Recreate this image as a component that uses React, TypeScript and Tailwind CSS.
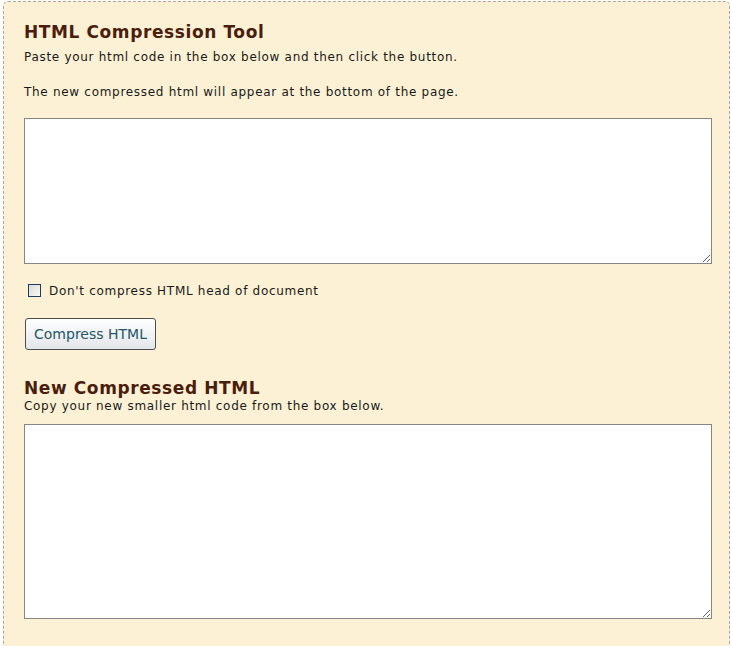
const verdana = "font-['Verdana','DejaVu_Sans',sans-serif]";

function Checkbox() {
  return (
    <span className="inline-block w-[13px] h-[13px] border border-[#1c3f5f] bg-gradient-to-br from-[#dcdcd6] to-[#f8f8f6] shrink-0" />
  );
}

export default function App() {
  return (
    <div className="w-[731px] h-[646px] overflow-hidden bg-white">
      <div
        className={`ml-[3px] mt-[1px] w-[727px] h-[700px] rounded-[5px] border border-dashed border-[#a9a9a0] bg-[#fcf1d4] pt-[20px] pl-[20px] pr-[16px] text-[#1a1a1a] ${verdana}`}
      >
        <h1 className="text-[17px] leading-[20px] tracking-[0.6px] font-bold text-[#4b1d0c]">
          HTML Compression Tool
        </h1>
        <p className="mt-[8px] text-[12px] leading-[15px] tracking-[0.7px]">
          Paste your html code in the box below and then click the button.
        </p>
        <p className="mt-[20px] text-[12px] leading-[15px] tracking-[0.7px]">
          The new compressed html will appear at the bottom of the page.
        </p>
        <textarea className="block mt-[18px] w-[688px] h-[146px] border border-[#858585] bg-white outline-none" />
        <label className="mt-[18px] ml-[4px] flex items-center gap-[8px] text-[12px] leading-[15px] tracking-[0.7px]">
          <Checkbox />
          <span className="mt-[2px]">Don't compress HTML head of document</span>
        </label>
        <button className="mt-[19px] ml-[1px] w-[131px] h-[32px] rounded-[3px] border border-[#4d4d4d] bg-gradient-to-b from-white to-[#e3e6ea] text-[14px] text-[#24566a] font-['DejaVu_Sans',sans-serif]">
          Compress HTML
        </button>
        <h2 className="mt-[28px] text-[17px] leading-[20px] tracking-[0.6px] font-bold text-[#4b1d0c]">
          New Compressed HTML
        </h2>
        <p className="mt-[1px] text-[12px] leading-[15px] tracking-[0.7px]">
          Copy your new smaller html code from the box below.
        </p>
        <textarea className="block mt-[10px] w-[688px] h-[195px] border border-[#858585] bg-white outline-none" />
      </div>
    </div>
  );
}
